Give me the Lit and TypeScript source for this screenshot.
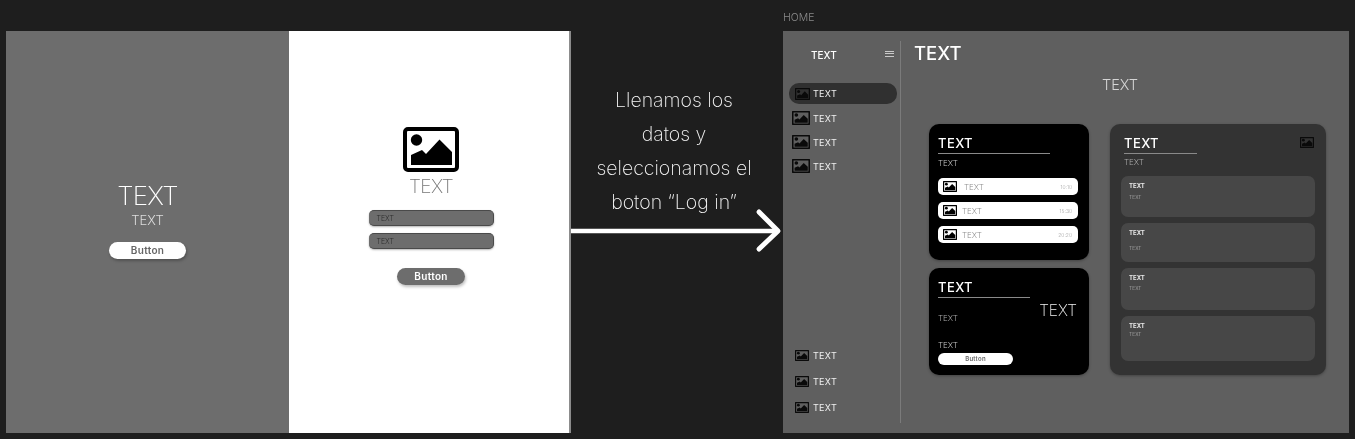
import { LitElement, html, css, svg } from "lit";
import { customElement } from "lit/decorators.js";

const picture = (cls: string) => html`
  <svg class="pic ${cls}" viewBox="0 0 56 45" preserveAspectRatio="none">
    <rect x="2" y="2" width="52" height="41" rx="3" fill="none" stroke="currentColor" stroke-width="4" />
    <circle cx="13.5" cy="13" r="5.7" fill="currentColor" />
    ${svg`<polygon points="8,38 8,28 19,23 23,27 36.5,12.5 49,25 49,38" fill="currentColor" />`}
  </svg>
`;

const navTop = ["pic-a", "pic-b", "pic-b", "pic-c"];
const navBottom = ["pic-d", "pic-d", "pic-d"];
const rows = [
  { cls: "", time: "10:10" },
  { cls: "near", time: "15:30" },
  { cls: "near", time: "20:20" },
];
const notes = [
  { cls: "n1", sub: "s1" },
  { cls: "n2", sub: "s2" },
  { cls: "n3", sub: "s3" },
  { cls: "n4", sub: "s4" },
];

@customElement("app-root")
export class AppRoot extends LitElement {
  static styles = css`
    :host {
      display: block;
      width: 1355px;
      height: 439px;
      overflow: hidden;
      background: #1e1e1e;
      font-family: Inter, "Liberation Sans", sans-serif;
    }
    * {
      box-sizing: border-box;
    }
    .page {
      display: flex;
      padding-left: 6px;
      will-change: transform;
    }
    .pic rect {
      stroke-width: 5.5;
    }
    .login {
      display: flex;
      width: 565px;
      height: 402px;
      margin-top: 31px;
    }
    .hero {
      display: flex;
      flex-direction: column;
      align-items: center;
      width: 283px;
      padding-top: 150px;
      background: #6d6d6d;
      color: #fff;
    }
    .hero-title {
      font-size: 26px;
      font-weight: 200;
      line-height: 29px;
      letter-spacing: -0.7px;
    }
    .hero-sub {
      font-size: 13px;
      font-weight: 300;
      line-height: 20px;
      color: #ddd;
    }
    .btn {
      display: flex;
      align-items: center;
      justify-content: center;
      padding-bottom: 1px;
      border-radius: 9px;
      font-size: 10px;
      font-weight: 600;
      letter-spacing: 0.3px;
      box-shadow: 1px 2px 3px rgba(0, 0, 0, 0.25);
    }
    .hero .btn {
      width: 77px;
      height: 17px;
      margin-top: 12px;
      background: #fff;
      color: #666;
    }
    .form {
      display: flex;
      flex-direction: column;
      align-items: center;
      width: 282px;
      padding: 96px 0 0 4px;
      background: #fff;
      border-right: 2px solid #8c8c8c;
    }
    .pic-hero {
      width: 56px;
      height: 45px;
      color: #000;
    }
    .pic-hero rect {
      stroke-width: 4;
    }
    .form-title {
      margin: 2px 0 11px;
      font-size: 19px;
      font-weight: 200;
      line-height: 25px;
      letter-spacing: -0.6px;
      color: #777;
    }
    .field {
      display: flex;
      align-items: center;
      width: 125px;
      height: 16px;
      margin-bottom: 7px;
      padding-left: 8px;
      border: 1px solid #4a4a4a;
      border-width: 1px 1px 1px 0;
      border-radius: 5px;
      background: #6d6d6d;
      box-shadow: 0 1px 2px rgba(0, 0, 0, 0.3);
      font-size: 7px;
      font-weight: 300;
      color: #2c2c2c;
    }
    .form .btn {
      width: 68px;
      height: 17px;
      margin-top: 12px;
      background: #6d6d6d;
      color: #fff;
    }
    .middle {
      width: 212px;
      padding-top: 83px;
    }
    .steps {
      padding-right: 6px;
      font-size: 19.5px;
      font-weight: 200;
      line-height: 34px;
      text-align: center;
      color: #f5f5f5;
    }
    .arrow {
      display: block;
      width: 212px;
      height: 46px;
      margin-top: -11px;
    }
    .home {
      display: flex;
      flex-direction: column;
      width: 566px;
    }
    .home-label {
      height: 31px;
      padding-top: 11px;
      font-size: 10.5px;
      font-weight: 300;
      line-height: 13px;
      color: #8b8b8b;
    }
    .frame {
      display: flex;
      height: 402px;
      padding: 10px 0;
      background: #5f5f5f;
    }
    .side {
      display: flex;
      flex-direction: column;
      width: 118px;
      padding: 0 3px 3px 6px;
      border-right: 1px solid #7b7b7b;
    }
    .side-head {
      display: flex;
      align-items: center;
      justify-content: space-between;
      height: 28px;
      margin-bottom: 13px;
      padding: 0 3px 0 22px;
      font-size: 10px;
      font-weight: 500;
      color: #fff;
    }
    .burger {
      width: 9px;
      height: 6px;
      margin-top: -3px;
      border: solid #c9c9c9;
      border-width: 1px 0;
      background: linear-gradient(#c9c9c9, #c9c9c9) center / 100% 1px no-repeat;
    }
    .nav {
      display: flex;
      flex-direction: column;
    }
    .nav-bottom {
      margin-top: auto;
    }
    .nav-item {
      display: flex;
      align-items: center;
      height: 24px;
      font-size: 9px;
      font-weight: 400;
      letter-spacing: 0.3px;
      color: #f0f0f0;
    }
    .nav-bottom .nav-item {
      height: 26px;
    }
    .nav-icon {
      display: flex;
      align-items: center;
      justify-content: flex-end;
      width: 21px;
      margin-right: 3px;
      color: #0a0a0a;
    }
    .nav-bottom .nav-icon {
      padding-right: 1px;
    }
    .active {
      height: 21px;
      margin: 1px 0 2px;
      border-radius: 10px;
      background: #303030;
    }
    .pic-a {
      width: 15px;
      height: 12px;
    }
    .pic-b {
      width: 18px;
      height: 14px;
    }
    .pic-c {
      width: 18px;
      height: 14px;
    }
    .pic-d {
      width: 14px;
      height: 11px;
    }
    .main {
      flex: 1;
      padding-left: 13px;
    }
    .main-title {
      height: 24px;
      font-size: 18.5px;
      font-weight: 500;
      line-height: 24px;
      color: #fff;
    }
    .main-sub {
      height: 49px;
      margin-top: 10px;
      padding-right: 23px;
      font-size: 14.5px;
      font-weight: 300;
      line-height: 20px;
      text-align: center;
      color: #d5d5d5;
    }
    .cols {
      display: flex;
      gap: 21px;
      padding-left: 15px;
    }
    .stack {
      display: flex;
      flex-direction: column;
      gap: 8px;
      width: 160px;
    }
    .card {
      border-radius: 10px;
      background: #000;
      box-shadow: 0 1px 3px rgba(0, 0, 0, 0.3);
      padding: 11px 9px 0;
    }
    .card-a {
      height: 136px;
    }
    .card-b {
      position: relative;
      height: 107px;
    }
    .card-title {
      font-size: 13px;
      font-weight: 500;
      line-height: 17px;
      letter-spacing: 0.4px;
      color: #fff;
      padding-bottom: 1px;
      border-bottom: 1px solid #8a8a8a;
    }
    .card-a .card-title {
      width: 112px;
    }
    .card-b .card-title {
      width: 92px;
    }
    .card-sub {
      margin-top: 3px;
      font-size: 8px;
      font-weight: 300;
      line-height: 12px;
      color: #c4c4c4;
    }
    .rows {
      display: flex;
      flex-direction: column;
      gap: 7px;
      margin: 9px 2px 0 0;
    }
    .row {
      display: flex;
      align-items: center;
      height: 17px;
      padding: 0 6px 0 5px;
      border-radius: 5px;
      background: #fff;
      color: #000;
      font-size: 8px;
      font-weight: 300;
    }
    .row .pic {
      width: 14px;
      height: 11px;
      margin-right: 7px;
    }
    .row.near .pic {
      margin-right: 5px;
    }
    .row-text {
      flex: 1;
      color: #8f8f8f;
    }
    .row-time {
      font-size: 5px;
      color: #a5a5a5;
    }
    .card-b .card-sub {
      margin-top: 14px;
      color: #a9a9a9;
    }
    .card-big {
      position: absolute;
      top: 33px;
      right: 12px;
      font-size: 15.5px;
      font-weight: 200;
      line-height: 20px;
      color: #f0f0f0;
    }
    .card-b .card-label {
      margin-top: 15px;
      font-size: 8px;
      font-weight: 300;
      line-height: 12px;
      color: #c4c4c4;
    }
    .card-b .btn {
      width: 75px;
      height: 12px;
      margin-top: 2px;
      border-radius: 6px;
      background: #fff;
      color: #666;
      font-size: 6px;
      box-shadow: none;
    }
    .panel {
      width: 216px;
      height: 251px;
      padding: 11px 11px 0;
      border-radius: 10px;
      background: #333;
      box-shadow: 0 1px 3px rgba(0, 0, 0, 0.3);
    }
    .panel-head {
      display: flex;
      justify-content: space-between;
      padding-left: 3px;
    }
    .panel .card-title {
      width: 73px;
    }
    .panel .card-sub {
      margin-top: 2px;
      padding-left: 3px;
      color: #aaa;
    }
    .panel-head .pic {
      width: 14px;
      height: 11px;
      margin: 2px 1px 0 0;
      color: #0a0a0a;
    }
    .notes {
      display: flex;
      flex-direction: column;
      gap: 6px;
      margin-top: 8px;
    }
    .note {
      padding: 5px 8px 0;
      border-radius: 7px;
      background: #474747;
    }
    .note-title {
      font-size: 6px;
      font-weight: 700;
      line-height: 9px;
      color: #e8e8e8;
    }
    .note-sub {
      font-size: 5px;
      font-weight: 300;
      line-height: 7px;
      color: #b5b5b5;
    }
    .n1 {
      height: 41px;
    }
    .n2 {
      height: 39px;
    }
    .n3 {
      height: 42px;
    }
    .n4 {
      height: 45px;
    }
    .s1 {
      margin-top: 4px;
    }
    .s2 {
      margin-top: 8px;
    }
    .s3 {
      margin-top: 3px;
    }
    .s4 {
      margin-top: 1px;
    }
  `;

  render() {
    return html`
      <div class="page">
        <section class="login">
          <div class="hero">
            <div class="hero-title">TEXT</div>
            <div class="hero-sub">TEXT</div>
            <div class="btn">Button</div>
          </div>
          <div class="form">
            ${picture("pic-hero")}
            <div class="form-title">TEXT</div>
            <div class="field">TEXT</div>
            <div class="field">TEXT</div>
            <div class="btn">Button</div>
          </div>
        </section>

        <section class="middle">
          <div class="steps">
            Llenamos los<br />datos y<br />seleccionamos el<br />boton “Log in”
          </div>
          <svg class="arrow" viewBox="0 0 212 46">
            <path d="M0 23 H205" fill="none" stroke="#fff" stroke-width="4.5" />
            <path d="M188 4 L207 23 L188 41" fill="none" stroke="#fff" stroke-width="5" stroke-linecap="round" stroke-linejoin="round" />
          </svg>
        </section>

        <section class="home">
          <div class="home-label">HOME</div>
          <div class="frame">
            <aside class="side">
              <div class="side-head"><span>TEXT</span><span class="burger"></span></div>
              <div class="nav">
                ${navTop.map(
                  (cls, i) => html`
                    <div class="nav-item ${i === 0 ? "active" : ""}">
                      <span class="nav-icon">${picture(cls)}</span>TEXT
                    </div>
                  `
                )}
              </div>
              <div class="nav nav-bottom">
                ${navBottom.map(
                  (cls) => html`
                    <div class="nav-item">
                      <span class="nav-icon">${picture(cls)}</span>TEXT
                    </div>
                  `
                )}
              </div>
            </aside>
            <main class="main">
              <div class="main-title">TEXT</div>
              <div class="main-sub">TEXT</div>
              <div class="cols">
                <div class="stack">
                  <div class="card card-a">
                    <div class="card-title">TEXT</div>
                    <div class="card-sub">TEXT</div>
                    <div class="rows">
                      ${rows.map(
                        (r) => html`
                          <div class="row ${r.cls}">
                            ${picture("")}
                            <span class="row-text">TEXT</span>
                            <span class="row-time">${r.time}</span>
                          </div>
                        `
                      )}
                    </div>
                  </div>
                  <div class="card card-b">
                    <div class="card-title">TEXT</div>
                    <div class="card-big">TEXT</div>
                    <div class="card-sub">TEXT</div>
                    <div class="card-label">TEXT</div>
                    <div class="btn">Button</div>
                  </div>
                </div>
                <div class="panel">
                  <div class="panel-head">
                    <div class="card-title">TEXT</div>
                    ${picture("")}
                  </div>
                  <div class="card-sub">TEXT</div>
                  <div class="notes">
                    ${notes.map(
                      (n) => html`
                        <div class="note ${n.cls}">
                          <div class="note-title">TEXT</div>
                          <div class="note-sub ${n.sub}">TEXT</div>
                        </div>
                      `
                    )}
                  </div>
                </div>
              </div>
            </main>
          </div>
        </section>
      </div>
    `;
  }
}
